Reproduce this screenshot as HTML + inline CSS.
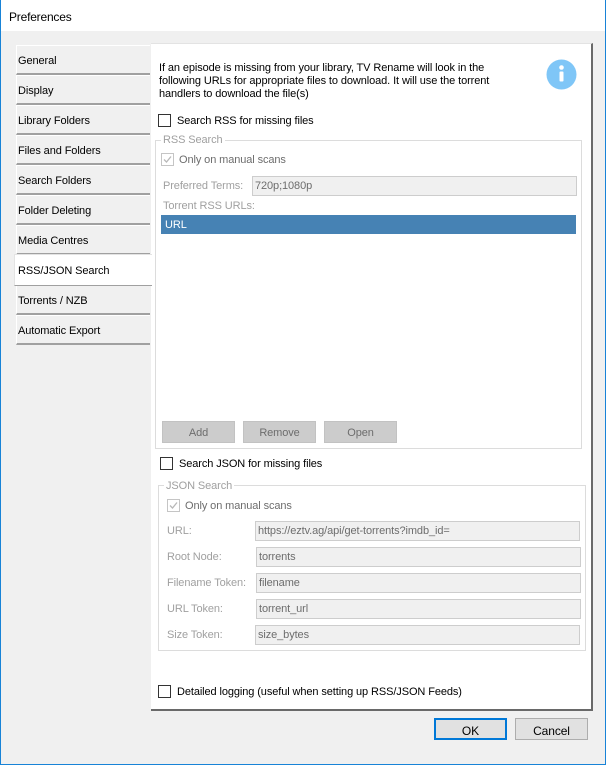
<!DOCTYPE html>
<html><head><style>
*{box-sizing:border-box;margin:0;padding:0}
body{width:606px;height:765px;background:#f0f0f0;font-family:"Liberation Sans",sans-serif;font-size:11px;letter-spacing:-0.1px;color:#000;position:relative;overflow:hidden}
.a{position:absolute}
.win{left:0;top:0;width:606px;height:765px;border:1px solid #1883d7;border-top:none}
.title{left:1px;top:0;width:604px;height:31px;background:#fff}
.tab{position:absolute;left:16px;width:134px;height:30px;background:#f0f0f0;border-left:1px solid #fff;border-top:1px solid #fff;border-bottom:2px solid #a0a0a0;padding:9px 0 0 1px;white-space:nowrap}
.sel{left:14px;width:138px;background:#fff;border:1px solid #e3e3e3;border-right:none;border-bottom:1px solid #a0a0a0}
.panel{left:151px;top:43px;width:442px;height:668px;background:#fff;border-top:1px solid #e3e3e3;border-right:2px solid #696969;border-bottom:2px solid #696969}
.cb{position:absolute;width:13px;height:13px;border:1px solid #333;background:#fff}
.cbd{border-color:#c5c5c5}
.grp{position:absolute;border:1px solid #dcdcdc}
.lg{position:absolute;background:#fff;color:#a0a0a0;padding:0 2px}
.g{color:#a0a0a0}
.inp{position:absolute;background:#f0f0f0;border:1px solid #cdcdcd;color:#6d6d6d;padding:3px 0 0 2px;height:20px}
.btn{position:absolute;background:#cccccc;border:1px solid #c2c2c2;color:#6d6d6d;text-align:center;height:22px;padding-top:5px}
.b2{background:#e1e1e1;border:1px solid #adadad;color:#000}
</style></head><body>
<div class="a win"></div>
<div class="a title"></div>
<div class="a" style="left:9px;top:10px;font-size:12px;letter-spacing:-0.2px">Preferences</div>

<div class="tab" style="top:45px">General</div>
<div class="tab" style="top:75px">Display</div>
<div class="tab" style="top:105px">Library Folders</div>
<div class="tab" style="top:135px">Files and Folders</div>
<div class="tab" style="top:165px">Search Folders</div>
<div class="tab" style="top:195px">Folder Deleting</div>
<div class="tab" style="top:225px">Media Centres</div>
<div class="tab" style="top:285px">Torrents / NZB</div>
<div class="tab" style="top:315px">Automatic Export</div>

<div class="a panel"></div>
<div class="tab sel" style="top:254px;height:32px;padding-top:10px;padding-left:3px">RSS/JSON Search</div>

<div class="a" style="left:159px;top:62px;line-height:13px">If an episode is missing from your library, TV Rename will look in the<br>following URLs for appropriate files to download. It will use the torrent<br>handlers to download the file(s)</div>
<svg class="a" style="left:546px;top:59px" width="31" height="31"><circle cx="15.5" cy="15.5" r="15" fill="#7fc6f7"/><circle cx="15.5" cy="8.5" r="2.3" fill="#fff"/><rect x="13.5" y="12.5" width="4" height="10" rx="1" fill="#fff"/></svg>

<div class="cb" style="left:158px;top:114px"></div>
<div class="a" style="left:177px;top:115px">Search RSS for missing files</div>

<div class="grp" style="left:155px;top:140px;width:427px;height:309px"></div>
<div class="lg" style="left:161px;top:134px">RSS Search</div>
<div class="cb cbd" style="left:161px;top:153px"></div>
<svg class="a" style="left:161px;top:153px" width="13" height="13"><path d="M3 6.5 L5.5 9 L10 3.5" stroke="#b8b8b8" stroke-width="1.3" fill="none"/></svg>
<div class="a" style="left:179px;top:154px;color:#6d6d6d">Only on manual scans</div>
<div class="a g" style="left:163px;top:180px">Preferred Terms:</div>
<div class="inp" style="left:252px;top:176px;width:325px">720p;1080p</div>
<div class="a g" style="left:163px;top:200px">Torrent RSS URLs:</div>
<div class="a" style="left:161px;top:215px;width:415px;height:19px;background:#4682b4;color:#fff;padding:4px 0 0 4px">URL</div>
<div class="btn" style="left:162px;top:421px;width:73px">Add</div>
<div class="btn" style="left:243px;top:421px;width:73px">Remove</div>
<div class="btn" style="left:324px;top:421px;width:73px">Open</div>

<div class="cb" style="left:160px;top:457px"></div>
<div class="a" style="left:179px;top:458px">Search JSON for missing files</div>

<div class="grp" style="left:158px;top:485px;width:428px;height:166px"></div>
<div class="lg" style="left:164px;top:480px">JSON Search</div>
<div class="cb cbd" style="left:167px;top:499px"></div>
<svg class="a" style="left:167px;top:499px" width="13" height="13"><path d="M3 6.5 L5.5 9 L10 3.5" stroke="#b8b8b8" stroke-width="1.3" fill="none"/></svg>
<div class="a" style="left:185px;top:500px;color:#6d6d6d">Only on manual scans</div>
<div class="a g" style="left:167px;top:525px">URL:</div>
<div class="inp" style="left:255px;top:521px;width:325px">https://eztv.ag/api/get-torrents?imdb_id=</div>
<div class="a g" style="left:167px;top:551px">Root Node:</div>
<div class="inp" style="left:256px;top:547px;width:325px">torrents</div>
<div class="a g" style="left:167px;top:577px">Filename Token:</div>
<div class="inp" style="left:256px;top:573px;width:325px">filename</div>
<div class="a g" style="left:167px;top:603px">URL Token:</div>
<div class="inp" style="left:256px;top:599px;width:325px">torrent_url</div>
<div class="a g" style="left:167px;top:629px">Size Token:</div>
<div class="inp" style="left:255px;top:625px;width:325px">size_bytes</div>

<div class="cb" style="left:158px;top:685px"></div>
<div class="a" style="left:177px;top:686px">Detailed logging (useful when setting up RSS/JSON Feeds)</div>

<div class="btn b2" style="left:434px;top:718px;width:73px;border:2px solid #0078d7;padding-top:4px;font-size:12px">OK</div>
<div class="btn b2" style="left:515px;top:718px;width:73px;font-size:12px">Cancel</div>
</body></html>
